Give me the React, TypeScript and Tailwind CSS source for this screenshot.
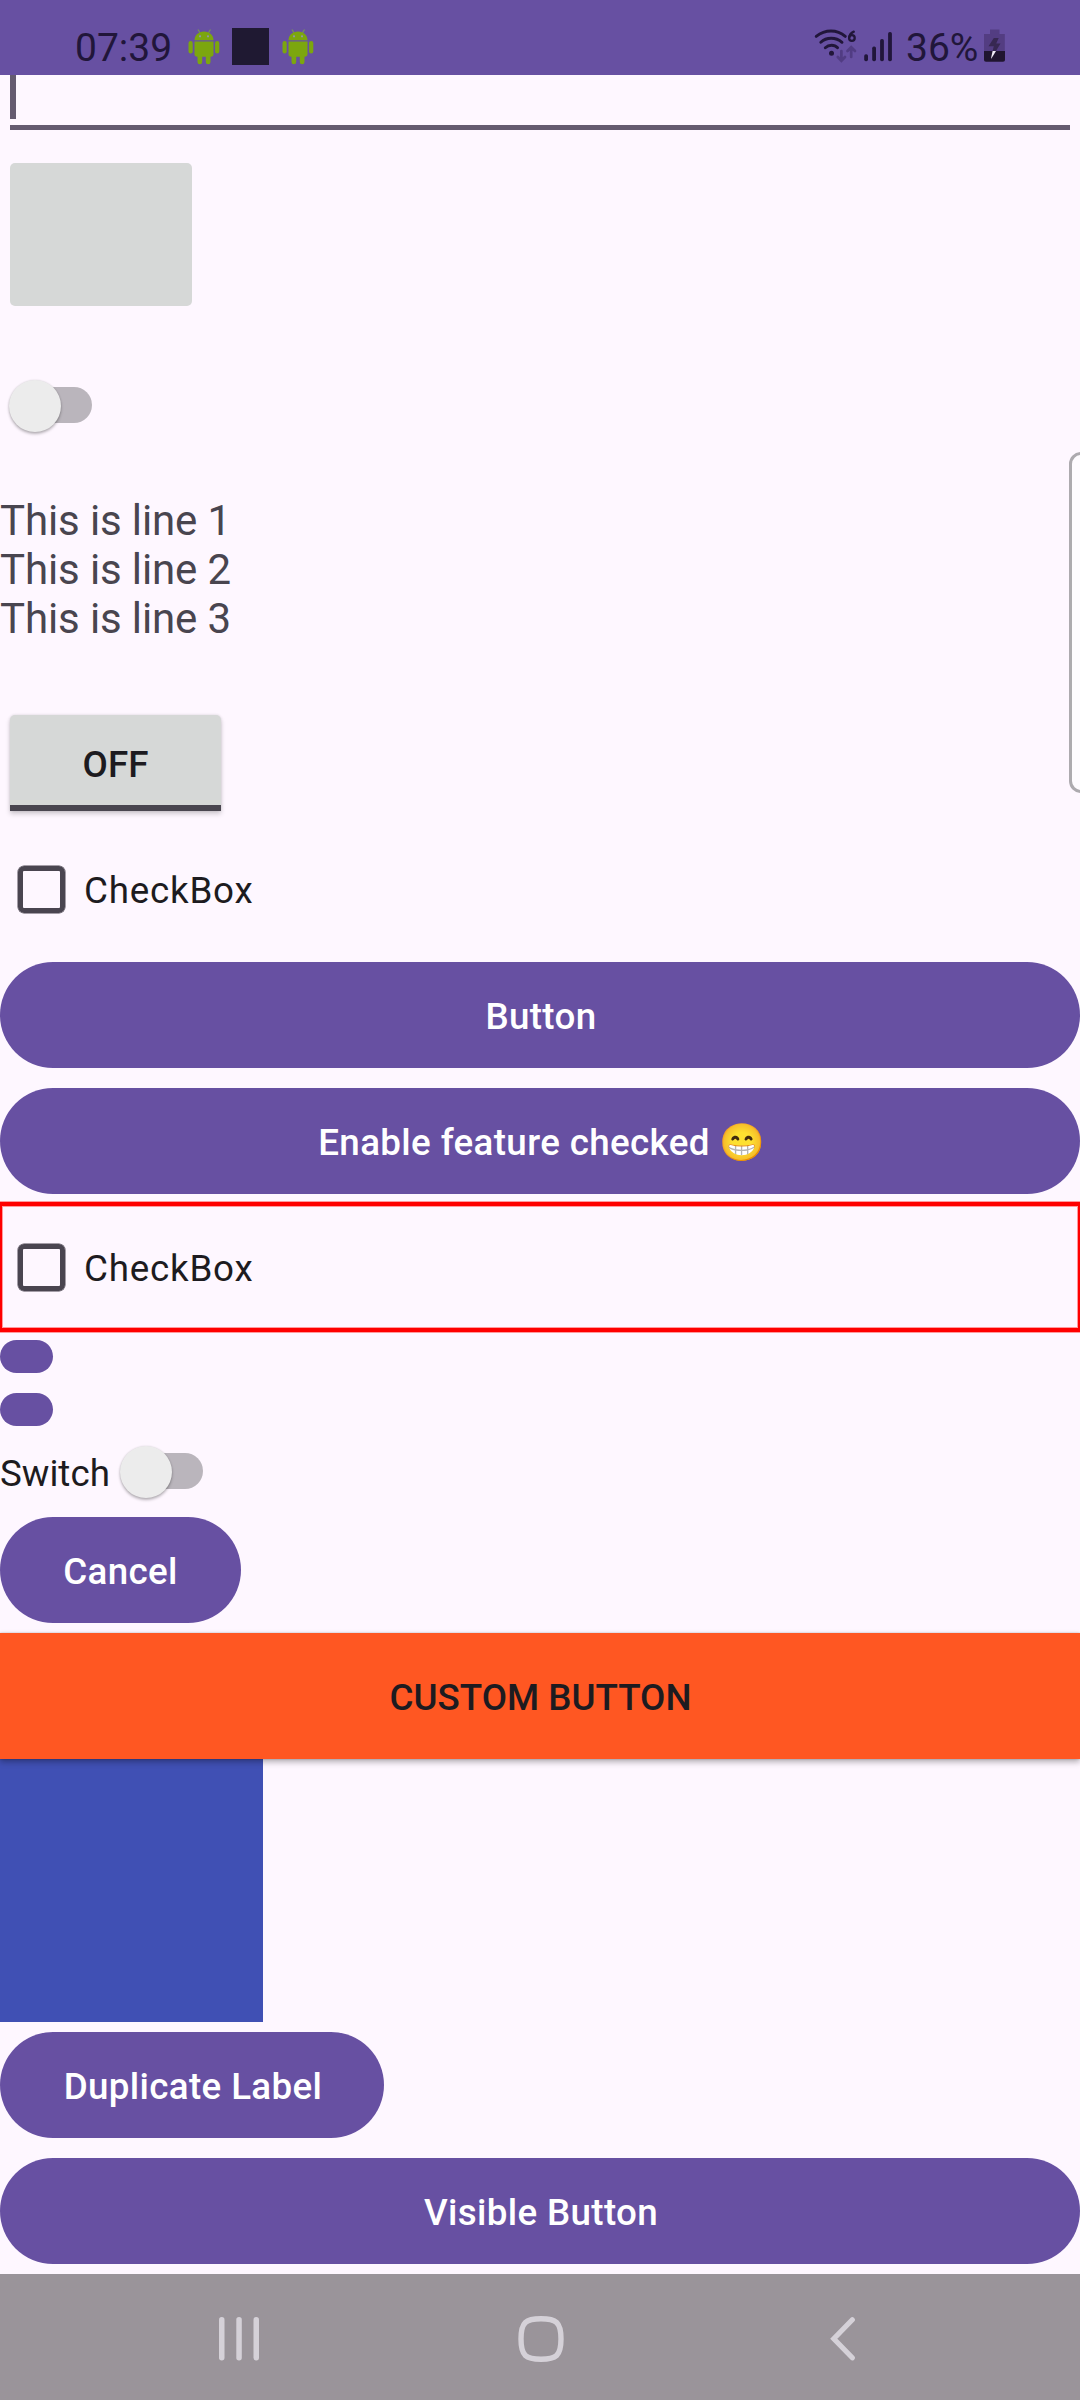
import React from "react";

function AndroidIcon({ className }: { className: string }) {
  return (
    <svg viewBox="0 0 32 37" className={className} fill="#7ca60e">
      <path d="M10 1.500l3 5M22.500 1.500l-3 5" stroke="#76945a" strokeWidth="1.200" fill="none" />
      <path d="M6.500 12.300C6.500 7 10.500 3.500 16 3.500S25.500 7 25.500 12.300z" />
      <circle cx="12" cy="8.300" r="1.100" fill="#8f96ae" />
      <circle cx="20" cy="8.300" r="1.100" fill="#8f96ae" />
      <path d="M6.500 13.500h19V26a2.700 2.700 0 0 1-2.700 2.700H22.500V34a2.350 2.350 0 0 1-4.700 0V28.700H14.200V34a2.350 2.350 0 0 1-4.700 0V28.700H9.200A2.700 2.700 0 0 1 6.500 26z" />
      <rect x="0.500" y="13" width="4.200" height="12.600" rx="2.100" />
      <rect x="27.100" y="13" width="4.200" height="12.600" rx="2.100" />
    </svg>
  );
}

function WifiIcon() {
  return (
    <svg viewBox="0 0 44 34" className="mt-[29px] h-[34px] w-[44px]" fill="none" strokeLinecap="round">
      <g stroke="#21163a">
        <path d="M2.200 7.400Q9 2 17 2t14.300 5.400" strokeWidth="2.900" />
        <path d="M6.800 13.300Q11 9.300 17.200 9.300t10.800 4" strokeWidth="2.900" />
        <path d="M11.300 18.800Q14 16.200 17.600 16.200t6 2.600" strokeWidth="2.900" />
      </g>
      <circle cx="17.500" cy="24.300" r="2.500" fill="#21163a" />
      <g stroke="#513c83" strokeWidth="2.700">
        <path d="M27.400 22v9M23.800 28l3.600 3.800 3.600-3.800" />
        <path d="M37.200 28v-9M33.500 22l3.700-3.800L41 22" />
      </g>
      <path d="M39.800 2.600Q35.600 4.500 35.200 8.500" stroke="#21163a" strokeWidth="2.300" />
      <circle cx="37.900" cy="9" r="2.800" stroke="#21163a" strokeWidth="2.300" />
    </svg>
  );
}

function SignalIcon() {
  return (
    <svg viewBox="0 0 28 30" className="mt-[32px] ml-[6px] h-[30px] w-[28px]" fill="#21163a">
      <rect x="0.200" y="22.300" width="3.800" height="6.900" rx="1.700" />
      <rect x="8.200" y="14.500" width="3.800" height="14.700" rx="1.700" />
      <rect x="16.100" y="7" width="3.800" height="22.200" rx="1.700" />
      <rect x="24.100" y="0" width="3.800" height="29.200" rx="1.700" />
    </svg>
  );
}

function BatteryIcon() {
  return (
    <svg viewBox="0 0 22 34" className="mt-[29px] ml-[6px] h-[34px] w-[22px]">
      <path d="M6 .5h9.500V5h5.300v17H0V5h6z" fill="#533d82" />
      <path d="M0 22h21v9q0 1.800-2 1.800H2q-2 0-2-1.800z" fill="#20152f" />
      <path d="M9.800 9h4.900l-2.500 5.600h4.300L12 22H8.600l1.200-4.700H4.500z" fill="#372852" />
      <path d="M8.600 22H12l-4.600 7.500H7z" fill="#f2eef8" />
    </svg>
  );
}

function StatusBar() {
  return (
    <header className="flex h-[75px] shrink-0 bg-[#6750a2] text-[39px] leading-[46px] text-[#21163a]">
      <span className="mt-[25px] ml-[75px] w-[113px]">07:39</span>
      <AndroidIcon className="mt-[28px] h-[37px] w-[32px]" />
      <div className="mt-[28px] ml-[12px] h-[37px] w-[37px] bg-[#1f1932]" />
      <AndroidIcon className="mt-[28px] ml-[13px] h-[37px] w-[32px]" />
      <div className="mr-[74px] ml-auto flex">
        <WifiIcon />
        <SignalIcon />
        <span className="mt-[25px] ml-[14px] w-[72px] whitespace-nowrap">36%</span>
        <BatteryIcon />
      </div>
    </header>
  );
}

function Toggle({ className }: { className: string }) {
  return (
    <div className={`flex h-[52px] w-[83px] items-center ${className}`}>
      <div className="z-10 mt-px h-[52px] w-[52px] shrink-0 rounded-full bg-[#ececec] shadow-[0_2px_3px_rgba(0,0,0,0.28),0_0_2px_rgba(0,0,0,0.12)]" />
      <div className="-ml-[44px] h-[36px] w-[75px] shrink-0 rounded-full bg-[#bab5bc]" />
    </div>
  );
}

function CheckBox({ className }: { className: string }) {
  return (
    <div className={`flex items-center ${className}`}>
      <div className="h-[47px] w-[47px] rounded-[6px] border-[5px] border-[#4a4550] shadow-[0_0_0_0.500px_#4a4550]" />
      <span className="mt-[3px] ml-[19px] leading-[43px] tracking-[0.78px] text-[#1d1b20]">CheckBox</span>
    </div>
  );
}

function PillButton({ label, className }: { label: string; className: string }) {
  return (
    <button
      className={`flex h-[106px] shrink-0 items-center justify-center rounded-full bg-[#6750a2] pt-[2px] font-medium tracking-[0.36px] whitespace-pre text-white ${className}`}
    >
      {label}
    </button>
  );
}

export default function App() {
  return (
    <div className="relative flex h-[2400px] w-[1080px] flex-col overflow-hidden bg-[#fef7ff] font-[Roboto,sans-serif] text-[36.75px] leading-[43px]">
      <StatusBar />

      <main className="flex h-[2199px] shrink-0 flex-col items-start">
        <div className="ml-[10px] h-[55px] w-[1060px] shrink-0 border-b-[5px] border-[#655b70]">
          <div className="h-[44px] w-[6px] bg-[#655b70]" />
        </div>

        <div className="mt-[33px] ml-[10px] h-[143px] w-[182px] shrink-0 rounded-[5px] bg-[#d6d8d7]" />

        <Toggle className="mt-[73px] ml-[9px] shrink-0" />

        <p className="mt-[65px] shrink-0 text-[42px] leading-[49px] tracking-[-0.120px] text-[#49454f]">
          This is line 1<br />
          This is line 2<br />
          This is line 3
        </p>

        <button className="mt-[72px] ml-[10px] flex h-[96px] w-[211px] shrink-0 items-center justify-center rounded-t-[5px] border-b-[6px] border-[#49454f] bg-[#d6d8d7] pt-[8px] font-medium text-[#1d1b20] shadow-[0_3px_5px_rgba(0,0,0,0.18),0_0_3px_rgba(0,0,0,0.12)]">
          OFF
        </button>

        <CheckBox className="mt-[54.500px] ml-[18px] h-[47px] shrink-0" />

        <PillButton label="Button" className="mt-[49.500px] w-full pl-[2px]" />
        <PillButton label="Enable feature checked 😁" className="mt-[20px] w-full pl-[4px]" />

        <div className="mt-[8px] h-[130px] w-full shrink-0 border-x-2 border-y-4 border-[#ff0000] shadow-[0_0_0_1px_#ff9a9d,inset_0_0_0_1px_#ff9a9d]">
          <CheckBox className="mt-[37.500px] ml-[16px] h-[47px]" />
        </div>

        <div className="mt-[8px] h-[33px] w-[53px] shrink-0 rounded-full bg-[#6750a2]" />
        <div className="mt-[20px] h-[33px] w-[53px] shrink-0 rounded-full bg-[#6750a2]" />

        <div className="mt-[19px] flex h-[52px] shrink-0 items-center">
          <span className="mt-[5px] w-[119.500px] text-[#1d1b20]">Switch</span>
          <Toggle className="" />
        </div>

        <PillButton label="Cancel" className="mt-[20px] w-[241px]" />

        <button className="z-10 mt-[10px] h-[126px] w-full shrink-0 bg-[#ff5722] pt-[2px] pl-px font-medium text-[#1d1b20] shadow-[0_3px_6px_rgba(0,0,0,0.3),0_0_2px_rgba(0,0,0,0.2)]">
          CUSTOM BUTTON
        </button>
        <div className="h-[263px] w-[263px] shrink-0 bg-[#4050b4]" />

        <PillButton label="Duplicate Label" className="mt-[10px] w-[384px] pl-[2px]" />
        <PillButton label="Visible Button" className="mt-[20px] w-full pl-[2px]" />
      </main>

      <nav className="flex h-[126px] shrink-0 items-center bg-[#9a949a]">
        <svg viewBox="0 0 40 44" className="mt-[3px] ml-[218.500px] h-[44px] w-[40px]" fill="#d5d1d8">
          <rect x="0" y="0" width="5.500" height="43.500" rx="2.700" />
          <rect x="17.300" y="0" width="5.500" height="43.500" rx="2.700" />
          <rect x="34.500" y="0" width="5.500" height="43.500" rx="2.700" />
        </svg>
        <svg viewBox="0 0 46 46" className="mt-[3px] ml-[259px] h-[46px] w-[46px]" fill="none">
          <path
            d="M23 2.800C38 2.800 43 6 43 23S38 43.200 23 43.200 3 40 3 23 8 2.800 23 2.800z"
            stroke="#d5d1d8"
            strokeWidth="5.400"
          />
        </svg>
        <svg viewBox="0 0 26 44" className="mt-[3px] ml-[266.500px] h-[44px] w-[26px]" fill="none">
          <path d="M22.300 2.800L3.800 21.800l18.500 19" stroke="#d5d1d8" strokeWidth="5.200" strokeLinecap="round" />
        </svg>
      </nav>

      <div className="absolute top-[452px] left-[1069px] h-[341px] w-[24px] rounded-[14px] border-[3px] border-[#adaaaf] bg-[#fefbff]" />
    </div>
  );
}
